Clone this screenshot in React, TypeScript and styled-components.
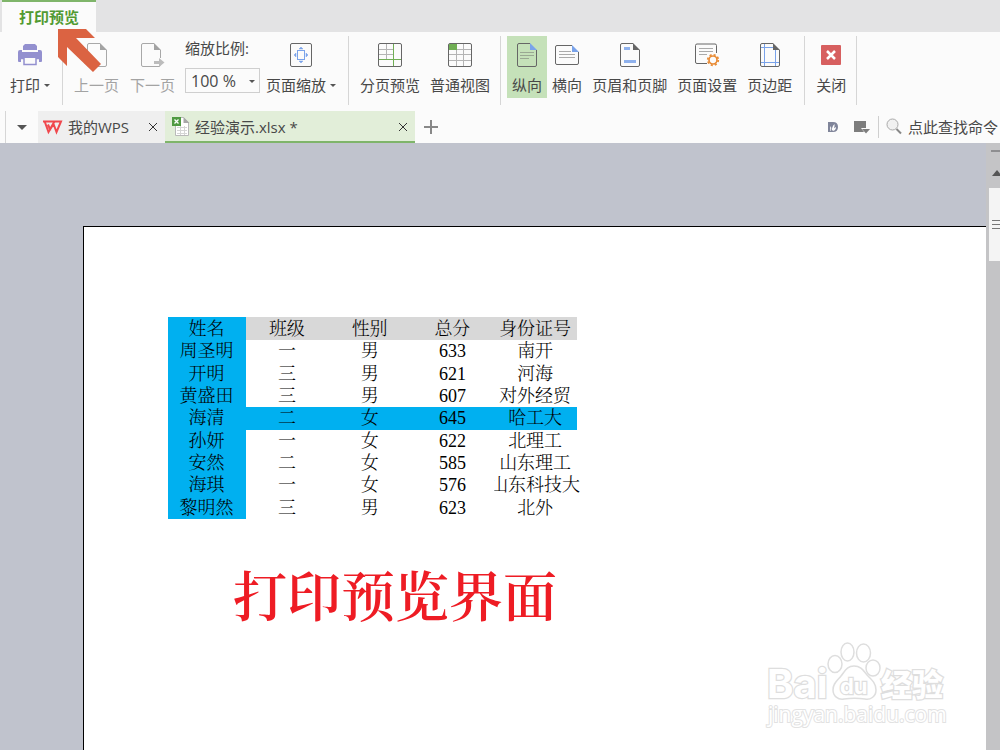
import React from 'react';
import styled, { createGlobalStyle, css } from 'styled-components';

const uiFont = '"Open Sans", "Noto Sans CJK SC", sans-serif';
const sheetFont = '"Liberation Serif", SimSun, "Noto Serif CJK SC", "Noto Sans CJK SC", serif';

const GlobalStyle = createGlobalStyle`
  *, *::before, *::after { box-sizing: border-box; }
  body { margin: 0; overflow: hidden; font-family: ${uiFont}; font-size: 15px; color: #484848; }
  button, input, select { font: inherit; color: inherit; margin: 0; padding: 0; border: 0; background: none; }
  button { cursor: pointer; }
  svg { display: block; flex: none; }
`;

const Shell = styled.div`
  height: 100vh;
  display: flex;
  flex-direction: column;
  background: #fbfbfb;
`;

const MenuStrip = styled.nav`
  position: relative;
  display: flex;
  flex: none;
  height: 32px;
  padding-left: 2px;
  background: #e3e3e4;
`;

const MenuTab = styled.button`
  width: 94px;
  border-top: 2px solid #7fb56a;
  background: #fbfbfb;
  color: #519a32;
  font-weight: 700;
  line-height: 28px;
`;

const Pointer = styled.svg`
  position: absolute;
  left: 58px;
  top: 29px;
  z-index: 2;
`;

const Ribbon = styled.div`
  display: flex;
  flex: none;
  height: 79px;
  padding: 4px 0 6px;
`;

const Group = styled.div<{ $gap?: number; $start?: number; $end?: number }>`
  display: flex;
  align-items: flex-start;
  gap: ${p => p.$gap ?? 0}px;
  padding: 0 ${p => p.$end ?? 7}px 0 ${p => p.$start ?? 6}px;
  border-right: 1px solid #d6d6d6;
`;

const ToolButton = styled.button<{ $active?: boolean }>`
  display: flex;
  flex-direction: column;
  align-items: center;
  gap: 7px;
  height: 62px;
  padding: 6px 5px 3px;
  line-height: 20px;
  white-space: nowrap;
  ${p => p.$active && css`background: #c5e1b9;`}
  &:disabled { color: #a3a3a3; cursor: default; }
`;

const ToolLabel = styled.span`
  display: flex;
  align-items: center;
  gap: 4px;
`;

const Caret = styled.span<{ $size?: number }>`
  border: ${p => p.$size ?? 3}px solid transparent;
  border-top-color: #555;
  border-bottom: 0;
`;

const ZoomField = styled.div`
  display: flex;
  flex-direction: column;
  gap: 10px;
  margin-left: 4px;
  padding-top: 2px;
  label { line-height: 20px; }
`;

const SelectBox = styled.div`
  position: relative;
  display: flex;
  width: 75px;
  height: 25px;
  border: 1px solid #cfcfcf;
  select { appearance: none; flex: 1; padding-left: 5px; outline: 0; font-size: 16px; }
  ${Caret} { position: absolute; right: 4px; top: 11px; pointer-events: none; }
`;

const DocBar = styled.div`
  display: flex;
  flex: none;
  height: 32px;
  align-items: stretch;
`;

const Divider = styled.span`
  width: 1px;
  margin: 5px 0 5px;
  background: #cfcfcf;
`;

const TabListButton = styled.button`
  display: flex;
  align-items: center;
  justify-content: center;
  width: 32px;
  margin-left: 5px;
  border-left: 1px solid #d6d6d6;
`;

const DocTab = styled.div<{ $active?: boolean }>`
  display: flex;
  align-items: center;
  gap: 4px;
  width: ${p => (p.$active ? 250 : 127)}px;
  padding: 2px 6px 0 ${p => (p.$active ? 7 : 5)}px;
  margin-left: ${p => (p.$active ? 0 : 1)}px;
  background: ${p => (p.$active ? '#e2eed9' : '#efefef')};
  border-bottom: 2px solid ${p => (p.$active ? '#7fb56a' : '#efefef')};
  white-space: nowrap;
`;

const DocName = styled.span`
  flex: 1;
  line-height: 20px;
`;

const IconButton = styled.button`
  display: flex;
  align-items: center;
  justify-content: center;
`;

const NewTab = styled(IconButton)`
  width: 32px;
`;

const DocTools = styled.div`
  display: flex;
  align-items: center;
  gap: 16px;
  margin: 0 8px 0 auto;
`;

const CommandSearch = styled.label`
  display: flex;
  align-items: center;
  gap: 6px;
  padding: 0 0 1px 7px;
  input { width: 92px; outline: 0; }
  input::placeholder { color: #484848; opacity: 1; }
`;

const Workspace = styled.main`
  position: relative;
  display: flex;
  flex: 1;
  min-height: 0;
  background: #c0c3cd;
`;

const Canvas = styled.div`
  display: flex;
  flex: 1;
  padding: 83px 0 0 83px;
  overflow: hidden;
`;

const Sheet = styled.article`
  flex: 1;
  padding: 90px 0 0 84px;
  border: solid #000;
  border-width: 1px 0 0 1px;
  background: #fff;
  font-family: ${sheetFont};
  color: #000;
`;

const ScoreTable = styled.table`
  width: 409px;
  height: 202px;
  table-layout: fixed;
  border-collapse: collapse;
  font-size: 18px;
  line-height: 22px;
  text-align: center;
`;

const Cell = styled.td`
  padding: 0 1px 0 0;
  font-weight: 300;
  white-space: nowrap;
`;

const NameCell = styled(Cell).attrs({ as: 'th', scope: 'row' })`
  background: #00b0f0;
`;

const HeadCell = styled(Cell).attrs({ as: 'th', scope: 'col' })`
  height: 23px;
  background: #d8d8d8;
  &:first-child { background: #00b0f0; }
`;

const Row = styled.tr<{ $marked?: boolean }>`
  ${p => p.$marked && css`background: #00b0f0;`}
`;

const CellText = styled.span`
  display: flex;
  justify-content: center;
  clip-path: inset(0 -8px 0 0);
`;

const Caption = styled.h1`
  margin: 40px 0 0 65px;
  color: #ee1c24;
  font-size: 54px;
  font-weight: 600;
  line-height: 80px;
`;

const ScrollTrack = styled.div`
  flex: none;
  display: flex;
  flex-direction: column;
  width: 14px;
  padding: 7px 0 0 3px;
  background: #c4c4c6;
`;

const SplitHandle = styled.span`
  height: 2px;
  margin-left: 2px;
  background: #8e8e90;
`;

const ScrollUp = styled(IconButton)`
  height: 36px;
  padding: 6px 0 0 3px;
`;

const ScrollThumb = styled.div`
  display: flex;
  flex-direction: column;
  justify-content: center;
  gap: 3px;
  height: 73px;
  padding-left: 3px;
  background: #f4f4f4;
  span { height: 1px; background: #777; }
`;

const Watermark = styled.svg`
  position: absolute;
  right: 50px;
  bottom: 16px;
  text { paint-order: stroke; }
`;

type IconProps = { children: React.ReactNode };
const Icon = ({ children }: IconProps) => (
  <svg width="26" height="26" viewBox="0 0 26 26" fill="none" stroke="#666" aria-hidden="true">{children}</svg>
);

const Portrait = ({ fold, stroke = '#666', children }: { fold: string; stroke?: string; children?: React.ReactNode }) => (
  <Icon>
    <path d="M16 1.500H5a1.500 1.500 0 0 0-1.500 1.500v20A1.500 1.500 0 0 0 5 24.500h16a1.500 1.500 0 0 0 1.500-1.500V8" stroke={stroke} />
    <path d="M16 1v7h7z" fill={fold} stroke="none" />
    {children}
  </Icon>
);

const Frame = () => <rect x="1.500" y="1.500" width="23" height="23" rx="1.500" />;

const PrintIcon = () => (
  <Icon>
    <path d="M8 2h10l2 2v4H6V4z" fill="#9390cf" stroke="none" />
    <path d="M3 8h2v2h16V8h2q2 0 2 2v9q0 1-1 1H2q-1 0-1-1v-9q0-2 2-2z" fill="#9390cf" stroke="none" />
    <path d="M4 16h18v5H4z" fill="#fbfbfb" stroke="none" />
    <path d="M4 16.500h3v6h12v-6h3" fill="#fbfbfb" stroke="#9390cf" strokeWidth="1.500" />
  </Icon>
);

const PrevIcon = () => (
  <Portrait fold="#a3a3a3" stroke="#a8a8a8"><path d="M2 20.500h9M5 17l-4 3.500 4 3.500" stroke="#bbb" strokeWidth="2" /></Portrait>
);

const NextIcon = () => (
  <Icon>
    <path d="M14 1.500H3A1.500 1.500 0 0 0 1.500 3v20A1.500 1.500 0 0 0 3 24.500h16q1 0 1.500-1M20.500 16V8" stroke="#a8a8a8" />
    <path d="M14 1v7h7z" fill="#a3a3a3" stroke="none" />
    <path d="M14 19h5v-3l5.500 4.500L19 25v-3h-5z" fill="#bcbcbc" stroke="none" />
  </Icon>
);

const FitIcon = () => (
  <Icon>
    <rect x="2.500" y="1.500" width="21" height="23" rx="1.500" />
    <rect x="9.500" y="8.500" width="7" height="9" stroke="#7aa3ea" />
    <path d="M11 7l2-2 2 2zM11 19l2 2 2-2zM8 11l-2 2 2 2zM18 11l2 2-2 2z" fill="#7aa3ea" stroke="#7aa3ea" strokeWidth=".5" />
  </Icon>
);

const BreakIcon = () => (
  <Icon>
    <path d="M9.500 2v16M2 7.500h14M2 12.500h14" stroke="#b4b4b4" />
    <Frame />
    <path d="M16.500 2v22M2 17.500h22" stroke="#70ae54" />
  </Icon>
);

const NormalIcon = () => (
  <Icon>
    <path d="M9.500 2v22M16.500 2v22M2 7.500h22M2 12.500h22M2 18.500h22" stroke="#b4b4b4" />
    <Frame />
    <path d="M2 2h8v6H2z" fill="#70ae54" stroke="none" />
  </Icon>
);

const PortraitIcon = () => (
  <Portrait fold="#7aa3ea"><path d="M6 10.500h14M6 13.500h14M6 16.500h9" stroke="#9aa893" /></Portrait>
);

const LandscapeIcon = () => (
  <Icon>
    <path d="M18 3.500H3A1.500 1.500 0 0 0 1.500 5v16A1.500 1.500 0 0 0 3 22.500h20a1.500 1.500 0 0 0 1.500-1.500V10" />
    <path d="M18 3v7h7z" fill="#7aa3ea" stroke="none" />
    <path d="M5 9.500h12M5 12.500h16M5 15.500h16" stroke="#aaa" />
  </Icon>
);

const HeaderIcon = () => (
  <Portrait fold="#666"><path d="M7 5h6v3H7zM7 18h12v3H7z" fill="#8fb1ec" stroke="none" /></Portrait>
);

const SetupIcon = () => (
  <Icon>
    <path d="M13 21.500H3A1.500 1.500 0 0 1 1.500 20V3.500A1.500 1.500 0 0 1 3 2h18a1.500 1.500 0 0 1 1.500 1.500V11" />
    <path d="M5 6.500h14M5 9.500h14M5 12.500h8" stroke="#aaa" />
    <circle cx="19" cy="18" r="5.300" stroke="#e88b35" strokeWidth="1.700" strokeDasharray="2.100 2.060" />
    <circle cx="19" cy="18" r="4" stroke="#e88b35" strokeWidth="1.700" />
  </Icon>
);

const MarginIcon = () => (
  <Portrait fold="#666"><path d="M7.500 2v22M18.500 8v16M4 5.500h12M4 20.500h18" stroke="#7aa3ea" /></Portrait>
);

const CloseIcon = () => (
  <Icon>
    <rect x="3" y="3" width="20" height="20" rx="1" fill="#d75f5f" stroke="none" />
    <path d="M9 9l8 8M17 9l-8 8" stroke="#fff" strokeWidth="2.500" />
  </Icon>
);

const SmallClose = () => (
  <svg width="12" height="12" viewBox="0 0 12 12" stroke="#333" aria-hidden="true"><path d="M2 2l8 8M10 2l-8 8" /></svg>
);

const WpsLogo = () => (
  <svg width="21" height="16" viewBox="0 0 21 16" fill="none" stroke="#f0484d" strokeWidth="2" aria-hidden="true">
    <path d="M0 2.500h11.500M1.500 2l4 11 5-8 3 8L18 2.500h-6.500L8 8.500M5 5.500l2.500 6" />
  </svg>
);

const XlsLogo = () => (
  <svg width="19" height="22" viewBox="0 0 19 22" fill="none" aria-hidden="true">
    <path d="M3.500 1.500h8l5 5v13h-13z" fill="#fff" stroke="#b9b9b9" />
    <path d="M11.500 1v6h6z" fill="#a8a8a8" />
    <path d="M5 11.500h10M5 14.500h10M5 17.500h10M8.500 10v9M12.500 10v9" stroke="#d5d5d5" />
    <rect x="0" y="1" width="9" height="9" fill="#4f9a41" />
    <path d="M2.500 3.500l4 4M6.500 3.500l-4 4" stroke="#fff" strokeWidth="1.300" />
  </svg>
);

type Tool = { label: string; icon: React.ReactNode; menu?: boolean; active?: boolean; disabled?: boolean };

const ToolItem = ({ label, icon, menu, active, disabled }: Tool) => (
  <ToolButton $active={active} disabled={disabled}>
    {icon}
    <ToolLabel>{label}{menu && <Caret />}</ToolLabel>
  </ToolButton>
);

const header = ['姓名', '班级', '性别', '总分', '身份证号'];
const rows = [
  ['周圣明', '一', '男', '633', '南开'],
  ['开明', '三', '男', '621', '河海'],
  ['黄盛田', '三', '男', '607', '对外经贸'],
  ['海清', '二', '女', '645', '哈工大'],
  ['孙妍', '一', '女', '622', '北理工'],
  ['安然', '二', '女', '585', '山东理工'],
  ['海琪', '一', '女', '576', '山东科技大'],
  ['黎明然', '三', '男', '623', '北外'],
];

const BaiduMark = () => (
  <Watermark width="190" height="96" viewBox="0 0 190 96" fill="#fff" stroke="#dedede" strokeWidth="1.500" role="img" aria-label="Baidu 经验">
    <ellipse cx="75" cy="26" rx="7" ry="8.500" />
    <ellipse cx="87.500" cy="14" rx="6.500" ry="9" />
    <ellipse cx="103.500" cy="15" rx="7" ry="9" />
    <ellipse cx="113" cy="30" rx="7" ry="8" />
    <path d="M94 28c8 0 10 6 14 10 5 5 8 8 8 14 0 7-6 10-11 9-7-1-14-1-21 0-6 1-11-3-11-9 0-7 4-9 8-14 4-5 6-10 13-10z" />
    <g strokeWidth="2.500">
      <text x="7" y="60" fontFamily="Inter, Liberation Sans, sans-serif" fontSize="40" fontWeight="700">Bai</text>
      <text x="80" y="56" fontFamily="Inter, Liberation Sans, sans-serif" fontSize="22" fontWeight="700">du</text>
      <text x="121" y="58" fontFamily="Noto Sans CJK SC, sans-serif" fontSize="31" fontWeight="900">经验</text>
    </g>
    <text x="8" y="84" fontFamily="Open Sans, sans-serif" fontSize="21" stroke="#e2e2e2" strokeWidth="2">jingyan.baidu.com</text>
  </Watermark>
);

export default function App() {
  return (
    <Shell>
      <GlobalStyle />
      <MenuStrip>
        <MenuTab>打印预览</MenuTab>
        <Pointer width="43" height="44" viewBox="0 0 43 44" fill="#db6342" aria-hidden="true">
          <path d="M0 0h28l9 9H18l25 26-8 8L9 18v19l-9-9z" />
        </Pointer>
      </MenuStrip>

      <Ribbon>
        <Group $start={5}>
          <ToolItem label="打印" icon={<PrintIcon />} menu />
        </Group>
        <Group $gap={1}>
          <ToolItem label="上一页" icon={<PrevIcon />} disabled />
          <ToolItem label="下一页" icon={<NextIcon />} disabled />
          <ZoomField>
            <label htmlFor="zoom">缩放比例:</label>
            <SelectBox>
              <select id="zoom" defaultValue="100"><option value="100">100 %</option></select>
              <Caret />
            </SelectBox>
          </ZoomField>
          <ToolItem label="页面缩放" icon={<FitIcon />} menu />
        </Group>
        <Group $end={5}>
          <ToolItem label="分页预览" icon={<BreakIcon />} />
          <ToolItem label="普通视图" icon={<NormalIcon />} />
        </Group>
        <Group>
          <ToolItem label="纵向" icon={<PortraitIcon />} active />
          <ToolItem label="横向" icon={<LandscapeIcon />} />
          <ToolItem label="页眉和页脚" icon={<HeaderIcon />} />
          <ToolItem label="页面设置" icon={<SetupIcon />} />
          <ToolItem label="页边距" icon={<MarginIcon />} />
        </Group>
        <Group $end={5}>
          <ToolItem label="关闭" icon={<CloseIcon />} />
        </Group>
      </Ribbon>

      <DocBar>
        <TabListButton aria-label="标签列表"><Caret $size={5} /></TabListButton>
        <DocTab>
          <WpsLogo />
          <DocName>我的WPS</DocName>
          <IconButton aria-label="关闭标签"><SmallClose /></IconButton>
        </DocTab>
        <DocTab $active>
          <XlsLogo />
          <DocName>经验演示.xlsx *</DocName>
          <IconButton aria-label="关闭标签"><SmallClose /></IconButton>
        </DocTab>
        <NewTab aria-label="新建标签">
          <svg width="14" height="14" viewBox="0 0 14 14" stroke="#888" strokeWidth="2" aria-hidden="true"><path d="M7 0v14M0 7h14" /></svg>
        </NewTab>
        <DocTools>
          <IconButton aria-label="文档助手">
            <svg width="10" height="10" viewBox="0 0 10 10" aria-hidden="true">
              <path d="M0 0h5q5 0 5 5t-5 5H0z" fill="#80859a" />
              <path d="M2.500 9q-1-3 0-5 1.500 2 .5 5zM4 9q-.5-4 2.500-7 .5 4-2.500 7zM5 9q0-3 3-4 0 3-3 4z" fill="#fff" />
            </svg>
          </IconButton>
          <IconButton aria-label="窗口">
            <svg width="16" height="13" viewBox="0 0 16 13" fill="#7d7d7d" aria-hidden="true">
              <path d="M0 0h12v7H7l3 4H0z" /><path d="M8 8h8l-4 4.500z" />
            </svg>
          </IconButton>
        </DocTools>
        <Divider />
        <CommandSearch>
          <svg width="16" height="17" viewBox="0 0 16 17" fill="#f1f1f1" stroke="#aaa" aria-hidden="true">
            <circle cx="6.500" cy="6.500" r="5.500" /><path d="M10.500 11l4.500 4.500" stroke="#888" strokeWidth="2" />
          </svg>
          <input placeholder="点此查找命令" aria-label="查找命令" />
        </CommandSearch>
      </DocBar>

      <Workspace>
        <Canvas>
          <Sheet>
            <ScoreTable>
              <colgroup><col width="78" /><col /><col /><col /><col /></colgroup>
              <thead>
                <Row>{header.map(h => <HeadCell key={h}>{h}</HeadCell>)}</Row>
              </thead>
              <tbody>
                {rows.map(([name, ...cells]) => (
                  <Row key={name} $marked={name === '海清'}>
                    <NameCell>{name}</NameCell>
                    {cells.map((c, i) => <Cell key={i}><CellText>{c}</CellText></Cell>)}
                  </Row>
                ))}
              </tbody>
            </ScoreTable>
            <Caption>打印预览界面</Caption>
          </Sheet>
        </Canvas>
        <ScrollTrack>
          <SplitHandle />
          <ScrollUp aria-label="向上滚动">
            <svg width="8" height="6" viewBox="0 0 8 6" fill="#555" aria-hidden="true"><path d="M0 6l5-6 5 6z" /></svg>
          </ScrollUp>
          <ScrollThumb><span /><span /><span /></ScrollThumb>
        </ScrollTrack>
        <BaiduMark />
      </Workspace>
    </Shell>
  );
}
